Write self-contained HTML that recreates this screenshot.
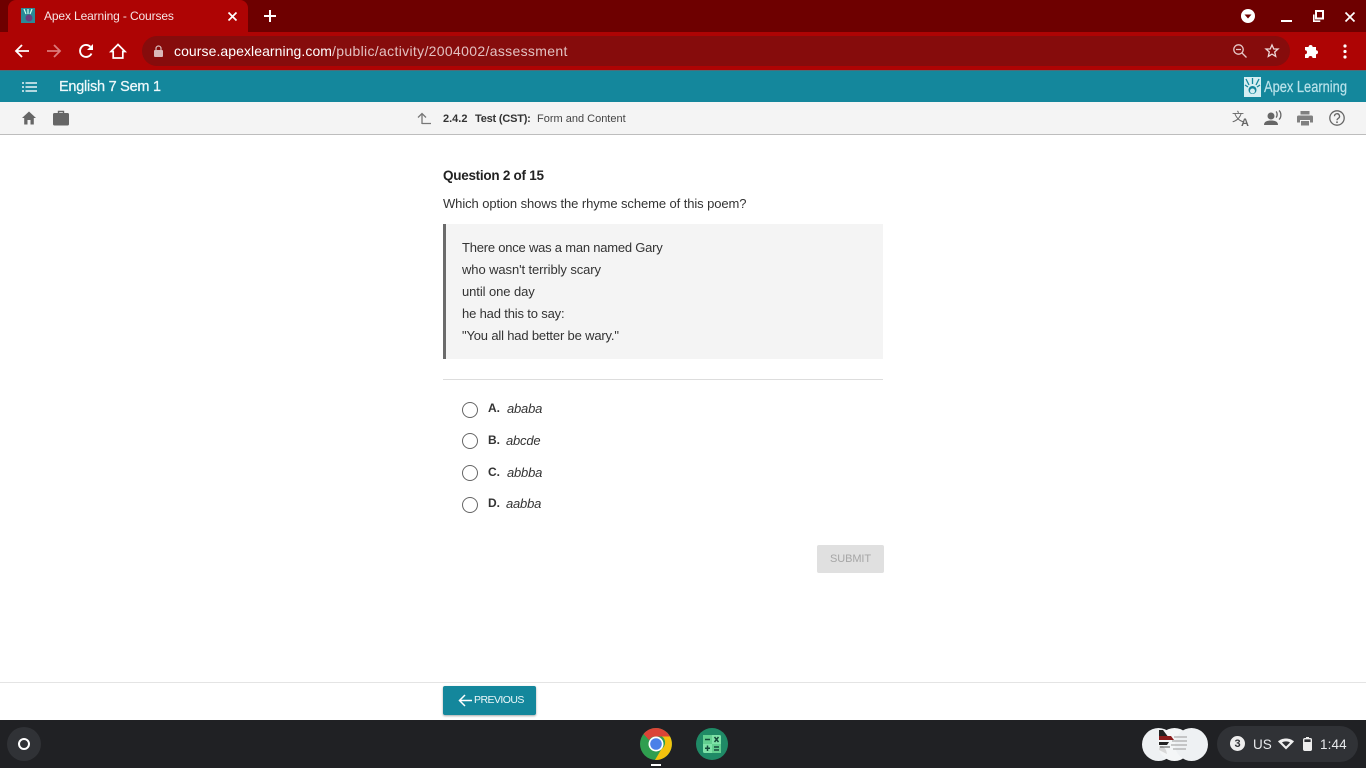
<!DOCTYPE html>
<html lang="en">
<head>
<meta charset="utf-8">
<title>Apex Learning - Courses</title>
<style>
html,body{margin:0;padding:0;width:1366px;height:768px;overflow:hidden;background:#fff;font-family:"Liberation Sans",sans-serif;}
.a{position:absolute;white-space:nowrap;}
svg{position:absolute;display:block;overflow:visible;}
.r{position:absolute;width:16px;height:16px;box-sizing:border-box;border:1px solid #666;border-radius:50%;}
</style>
</head>
<body>
<!-- browser chrome -->
<div class="a" style="left:0;top:0;width:1366px;height:32px;background:#6e0000;"></div>
<div class="a" style="left:8px;top:0;width:240px;height:33px;background:#ae0404;border-radius:8px 8px 0 0;"></div>
<div class="a" style="left:0;top:32px;width:1366px;height:38px;background:#ae0404;"></div>
<div class="a" style="left:142px;top:36px;width:1148px;height:30px;background:#860c0c;border-radius:15px;"></div>

<svg style="left:21px;top:8px" width="14" height="15" viewBox="0 0 14 15"><rect width="14" height="15" fill="#2a8a98"/><path d="M3 1l2 5M7 1v5M11 1L9 6" stroke="#cfe" stroke-width="1.2"/><circle cx="8" cy="10" r="3.5" fill="#6a3f80"/></svg>
<div class="a" style="left:44px;top:8px;font-size:12px;line-height:16px;color:#f6e5e5;letter-spacing:-.13px;">Apex Learning - Courses</div>
<svg style="left:228px;top:12px" width="9" height="9" viewBox="0 0 9 9"><path d="M.5.5l8 8M8.500.5l-8 8" stroke="#fff" stroke-width="1.700"/></svg>
<svg style="left:264px;top:10px" width="12" height="12" viewBox="0 0 12 12"><path d="M6 0v12M0 6h12" stroke="#fff" stroke-width="2"/></svg>

<svg style="left:14px;top:43px" width="16" height="16" viewBox="0 0 16 16"><path d="M15 8H2M8 2L2 8l6 6" fill="none" stroke="#fff" stroke-width="1.8"/></svg>
<svg style="left:46px;top:43px" width="16" height="16" viewBox="0 0 16 16"><path d="M1 8h13M8 2l6 6-6 6" fill="none" stroke="#dc7a7a" stroke-width="1.8"/></svg>
<svg style="left:78px;top:43px" width="16" height="16" viewBox="0 0 16 16"><path d="M13.500 10.500A6 6 0 1 1 12.300 3.700" fill="none" stroke="#fff" stroke-width="1.900"/><path d="M15 1v6H9z" fill="#fff"/></svg>
<svg style="left:110px;top:43px" width="16" height="16" viewBox="0 0 16 16"><path d="M8 1.500L1 8.500h2.200V15h9.600V8.500H15z" fill="none" stroke="#fff" stroke-width="1.700"/></svg>
<svg style="left:154px;top:45px" width="9" height="12" viewBox="0 0 9 12"><rect x="0" y="5" width="9" height="7" rx="1" fill="#d9b8b8"/><path d="M2 5V3.500a2.500 2.500 0 0 1 5 0V5" fill="none" stroke="#d9b8b8" stroke-width="1.200"/></svg>
<div class="a" style="left:174px;top:42px;font-size:14px;line-height:18px;color:#e2c0c0;letter-spacing:.07px;"><span style="color:#fff">course.apexlearning.com</span><span style="letter-spacing:.33px">/public/activity/2004002/assessment</span></div>
<svg style="left:1233px;top:44px" width="14" height="14" viewBox="0 0 14 14"><circle cx="5.500" cy="5.500" r="4.700" fill="none" stroke="#e6c8c8" stroke-width="1.300"/><path d="M3 5.500h5M9 9l4.500 4.500" stroke="#e6c8c8" stroke-width="1.300"/></svg>
<svg style="left:1265px;top:44px" width="14" height="14" viewBox="0 0 14 14"><path d="M7 1l1.800 4h4.200l-3.300 3 1 4.400L7 10.100l-3.700 2.300 1-4.400L1 5h4.200z" fill="none" stroke="#eed8d8" stroke-width="1.300"/></svg>
<svg style="left:1304px;top:43px" width="16" height="15" viewBox="0 0 16 15"><path d="M1 4h3.600a2 2 0 1 1 4 0h3.400v3.200a2 2 0 1 1 0 4V15H8.500a2 2 0 1 0-4 0H1v-3.700a2 2 0 1 0 0-4z" fill="#fff"/></svg>
<svg style="left:1343px;top:44px" width="4" height="15" viewBox="0 0 4 15"><circle cx="2" cy="2" r="1.600" fill="#fff"/><circle cx="2" cy="7.500" r="1.600" fill="#fff"/><circle cx="2" cy="13" r="1.600" fill="#fff"/></svg>

<svg style="left:1241px;top:9px" width="14" height="14" viewBox="0 0 14 14"><circle cx="7" cy="7" r="7" fill="#fff"/><path d="M3.500 5.500h7L7 9.500z" fill="#6e0000"/></svg>
<div class="a" style="left:1281px;top:20px;width:11px;height:2px;background:#fff;"></div>
<svg style="left:1313px;top:11px" width="10" height="11" viewBox="0 0 10 11"><rect x="3" y="0" width="7" height="7.500" fill="none" stroke="#fff" stroke-width="2"/><path d="M.8 3.500v6.700h6.500" fill="none" stroke="#fff" stroke-width="1.600"/></svg>
<svg style="left:1345px;top:12px" width="10" height="10" viewBox="0 0 10 10"><path d="M.5.5l9 9M9.500.5l-9 9" stroke="#fff" stroke-width="1.700"/></svg>

<!-- app header -->
<div class="a" style="left:0;top:70px;width:1366px;height:32px;background:#14879c;border-top:1px solid #4f6c78;box-sizing:border-box;"></div>
<svg style="left:22px;top:82px" width="15" height="10" viewBox="0 0 15 10"><path d="M0 1h2M3.500 1H15M0 5h2M3.500 5H15M0 9h2M3.500 9H15" stroke="#e8f4f6" stroke-width="1.600"/></svg>
<div class="a" style="left:59px;top:78px;font-size:14.500px;line-height:18px;color:#eef8fa;letter-spacing:-.25px;-webkit-text-stroke:.25px #eef8fa;">English 7 Sem 1</div>
<svg style="left:1244px;top:77px" width="17" height="20" viewBox="0 0 17 20"><rect width="17" height="20" fill="#d5eef2"/><path d="M2 2l3 6M8.500 1v6M15 2l-3 6M1 8l3 2M16 8l-3 2" stroke="#14879c" stroke-width="1.300"/><circle cx="8.500" cy="13" r="4" fill="#14879c"/><circle cx="8.500" cy="14" r="2.500" fill="#d5eef2"/></svg>
<div class="a" style="left:1264px;top:78px;font-size:15.500px;line-height:19px;color:#b9e2ea;transform:scaleX(.83);transform-origin:left top;-webkit-text-stroke:.2px #b9e2ea;">Apex Learning</div>

<!-- sub bar -->
<div class="a" style="left:0;top:102px;width:1366px;height:33px;background:#f4f4f4;border-bottom:1px solid #bdbdbd;box-sizing:border-box;"></div>
<svg style="left:22px;top:111px" width="14" height="14" viewBox="0 0 14 14"><path d="M7 .5L0 7h2.200v6.500h3.300V9h3v4.500h3.300V7H14z" fill="#666"/></svg>
<svg style="left:53px;top:110px" width="16" height="16" viewBox="0 0 16 16"><path d="M5.500 3V1.500h5V3" fill="none" stroke="#666" stroke-width="1.400"/><rect x="0" y="3" width="16" height="12.500" rx="1.500" fill="#666"/></svg>
<svg style="left:417px;top:112px" width="14" height="13" viewBox="0 0 14 13"><path d="M5 12V2M1 5.500L5 1.500l4 4M5 11.500h9" fill="none" stroke="#777" stroke-width="1.300"/></svg>
<div class="a" style="left:443px;top:112px;font-size:11px;line-height:15px;color:#333;font-weight:bold;">2.4.2</div>
<div class="a" style="left:475px;top:112px;font-size:11px;line-height:15px;color:#333;font-weight:bold;letter-spacing:-.2px;">Test (CST):</div>
<div class="a" style="left:537px;top:112px;font-size:11px;line-height:15px;color:#444;">Form and Content</div>
<div class="a" style="left:1232px;top:110px;font-size:12px;line-height:14px;color:#666;font-family:'Liberation Sans','Noto Sans CJK SC',sans-serif;">文</div>
<div class="a" style="left:1241px;top:117px;font-size:11px;line-height:13px;color:#666;font-weight:bold;">A</div>
<svg style="left:1264px;top:110px" width="18" height="16" viewBox="0 0 18 16"><circle cx="7" cy="6" r="3.500" fill="#666"/><path d="M0 15c0-3.500 3-4.500 7-4.500s7 1 7 4.500z" fill="#666"/><path d="M12 1.500c1.500 1 1.500 5 0 6M15 .5c2.500 2 2.500 7 0 9" fill="none" stroke="#666" stroke-width="1.300"/></svg>
<svg style="left:1297px;top:111px" width="16" height="15" viewBox="0 0 16 15"><rect x="3.500" y="0" width="9" height="3.500" fill="#808080"/><path d="M1.500 4.500h13a1.500 1.500 0 0 1 1.500 1.500v5.500h-3V9H3v2.500H0V6a1.500 1.500 0 0 1 1.500-1.500z" fill="#808080"/><rect x="4" y="10" width="8" height="4.500" fill="#808080"/></svg>
<svg style="left:1329px;top:110px" width="16" height="16" viewBox="0 0 16 16"><circle cx="8" cy="8" r="7.200" fill="none" stroke="#666" stroke-width="1.300"/><path d="M5.500 6.200a2.500 2.500 0 1 1 3.700 2.200c-.8.500-1.200.9-1.200 1.900" fill="none" stroke="#666" stroke-width="1.300"/><circle cx="8" cy="12.200" r=".9" fill="#666"/></svg>

<!-- question -->
<div class="a" style="left:443px;top:167px;font-size:13.500px;line-height:17px;font-weight:bold;color:#222;letter-spacing:-.27px;">Question 2 of 15</div>
<div class="a" style="left:443px;top:195px;font-size:13px;line-height:17px;color:#333;letter-spacing:-.09px;">Which option shows the rhyme scheme of this poem?</div>

<div class="a" style="left:443px;top:224px;width:440px;height:135px;background:#f4f4f4;border-left:3px solid #6b6b6b;box-sizing:border-box;"></div>
<div class="a" style="left:462px;top:239px;font-size:13px;line-height:17px;color:#333;letter-spacing:-.22px;">There once was a man named Gary</div>
<div class="a" style="left:462px;top:261px;font-size:13px;line-height:17px;color:#333;letter-spacing:-.09px;">who wasn't terribly scary</div>
<div class="a" style="left:462px;top:283px;font-size:13px;line-height:17px;color:#333;letter-spacing:-.08px;">until one day</div>
<div class="a" style="left:462px;top:305px;font-size:13px;line-height:17px;color:#333;letter-spacing:-.16px;">he had this to say:</div>
<div class="a" style="left:462px;top:327px;font-size:13px;line-height:17px;color:#333;letter-spacing:-.17px;">"You all had better be wary."</div>
<div class="a" style="left:443px;top:379px;width:440px;height:1px;background:#ddd;"></div>

<!-- options -->
<div class="r" style="left:462px;top:402px;"></div>
<div class="a" style="left:488px;top:400px;font-size:12px;line-height:17px;font-weight:bold;color:#333;">A.</div>
<div class="a" style="left:507px;top:400px;font-size:13px;line-height:17px;font-style:italic;color:#333;letter-spacing:-.2px;">ababa</div>
<div class="r" style="left:462px;top:433px;"></div>
<div class="a" style="left:488px;top:432px;font-size:12px;line-height:17px;font-weight:bold;color:#333;">B.</div>
<div class="a" style="left:506px;top:432px;font-size:13px;line-height:17px;font-style:italic;color:#333;letter-spacing:-.2px;">abcde</div>
<div class="r" style="left:462px;top:465px;"></div>
<div class="a" style="left:488px;top:464px;font-size:12px;line-height:17px;font-weight:bold;color:#333;">C.</div>
<div class="a" style="left:507px;top:464px;font-size:13px;line-height:17px;font-style:italic;color:#333;letter-spacing:-.2px;">abbba</div>
<div class="r" style="left:462px;top:497px;"></div>
<div class="a" style="left:488px;top:495px;font-size:12px;line-height:17px;font-weight:bold;color:#333;">D.</div>
<div class="a" style="left:506px;top:495px;font-size:13px;line-height:17px;font-style:italic;color:#333;letter-spacing:-.2px;">aabba</div>

<div class="a" style="left:817px;top:545px;width:67px;height:28px;background:#e0e0e0;border-radius:2px;"></div>
<div class="a" style="left:817px;top:551px;width:67px;text-align:center;font-size:11px;line-height:16px;color:#a6a6a6;letter-spacing:-.1px;">SUBMIT</div>

<!-- footer -->
<div class="a" style="left:0;top:682px;width:1366px;height:38px;background:#fff;border-top:1px solid #e4e4e4;box-sizing:border-box;"></div>
<div class="a" style="left:443px;top:686px;width:93px;height:29px;background:#14879c;border-radius:2px;box-shadow:0 1px 2px rgba(0,0,0,.35);"></div>
<svg style="left:458px;top:694px" width="14" height="13" viewBox="0 0 14 13"><path d="M14 6.500H1.500M7 1L1.500 6.500 7 12" fill="none" stroke="#fff" stroke-width="1.500"/></svg>
<div class="a" style="left:474px;top:693px;font-size:10.500px;line-height:15px;color:#eef8fa;letter-spacing:-.55px;">PREVIOUS</div>

<!-- shelf -->
<div class="a" style="left:0;top:720px;width:1366px;height:48px;background:#202124;"></div>
<div class="a" style="left:7px;top:727px;width:34px;height:34px;border-radius:50%;background:#303236;"></div>
<div class="a" style="left:18px;top:738px;width:12px;height:12px;box-sizing:border-box;border:2px solid #fff;border-radius:50%;"></div>

<svg style="left:640px;top:728px" width="32" height="32" viewBox="0 0 32 32">
<circle cx="16" cy="16" r="16" fill="#2f9e4f"/>
<path d="M16 0A16 16 0 0 1 30 8.500H16A7.500 7.500 0 0 0 9 12L3.500 6A16 16 0 0 1 16 0z" fill="#db4437"/>
<path d="M30 8.500A16 16 0 0 1 15 32L21.500 21A7.500 7.500 0 0 0 22 8.500z" fill="#f4c20d"/>
<circle cx="16" cy="16" r="7.500" fill="#fff"/><circle cx="16" cy="16" r="5.800" fill="#4a80e8"/>
</svg>
<div class="a" style="left:651px;top:764px;width:10px;height:2px;background:#fff;"></div>

<svg style="left:696px;top:728px" width="32" height="32" viewBox="0 0 32 32">
<circle cx="16" cy="16" r="16" fill="#1f8a66"/>
<rect x="7" y="7" width="18" height="18" rx="1.500" fill="#7fe3a8"/>
<rect x="7" y="7" width="9" height="9" fill="#62cf90"/>
<rect x="16" y="16" width="9" height="9" fill="#62cf90"/>
<path d="M9 11.500h5M18.500 9l4 5M22.500 9l-4 5M11.500 17.500v5.500M9 20.200h5M18 19h5M18 22h5" stroke="#14493a" stroke-width="1.500"/>
</svg>

<!-- notification thumbnails: overlapping circles -->
<div class="a" style="left:1142px;top:728px;width:33px;height:33px;background:#eef1f3;border-radius:50%;"></div>
<div class="a" style="left:1158px;top:728px;width:33px;height:33px;background:#f4f6f7;border-radius:50%;"></div>
<div class="a" style="left:1175px;top:728px;width:33px;height:33px;background:#eef1f3;border-radius:50%;"></div>
<svg style="left:1142px;top:728px" width="66" height="33" viewBox="0 0 66 33">
<path d="M17 2h4l6 8H17z" fill="#222"/><path d="M17 8h12l3 4H17z" fill="#8a1c1c"/>
<path d="M17 14h10l-2 3H17z" fill="#222"/>
<path d="M17 18h4l3 4 1 4-4-2-4-2z" fill="#d8d8d8"/>
<path d="M32 9h13M30 13h15M29 17h16M31 21h13" stroke="#999" stroke-width="1"/>
<path d="M18 19h10" stroke="#555" stroke-width="1"/>
</svg>

<div class="a" style="left:1217px;top:726px;width:141px;height:36px;background:#303236;border-radius:18px;"></div>
<div class="a" style="left:1230px;top:736px;width:15px;height:15px;border-radius:50%;background:#eee;color:#303236;font-size:11px;line-height:16px;text-align:center;font-weight:bold;">3</div>
<div class="a" style="left:1253px;top:736px;font-size:13.500px;line-height:17px;color:#e8eaed;">US</div>
<svg style="left:1278px;top:738px" width="16" height="12" viewBox="0 0 16 12"><path d="M8 11.500L0 3.500C4-.5 12-.5 16 3.500z" fill="#f0f0f0"/><path d="M8 8.500L4 4.500c2-1.500 6-1.500 8 0z" fill="#303236"/></svg>
<svg style="left:1303px;top:737px" width="9" height="14" viewBox="0 0 9 14"><rect x="3" y="0" width="3" height="2" fill="#eee"/><rect x=".7" y="1.700" width="7.600" height="11.600" rx="1" fill="none" stroke="#eee" stroke-width="1.400"/><rect x="1" y="5" width="7" height="8" fill="#eee"/></svg>
<div class="a" style="left:1320px;top:736px;font-size:13.500px;line-height:17px;color:#e8eaed;letter-spacing:.1px;">1:44</div>
</body>
</html>
